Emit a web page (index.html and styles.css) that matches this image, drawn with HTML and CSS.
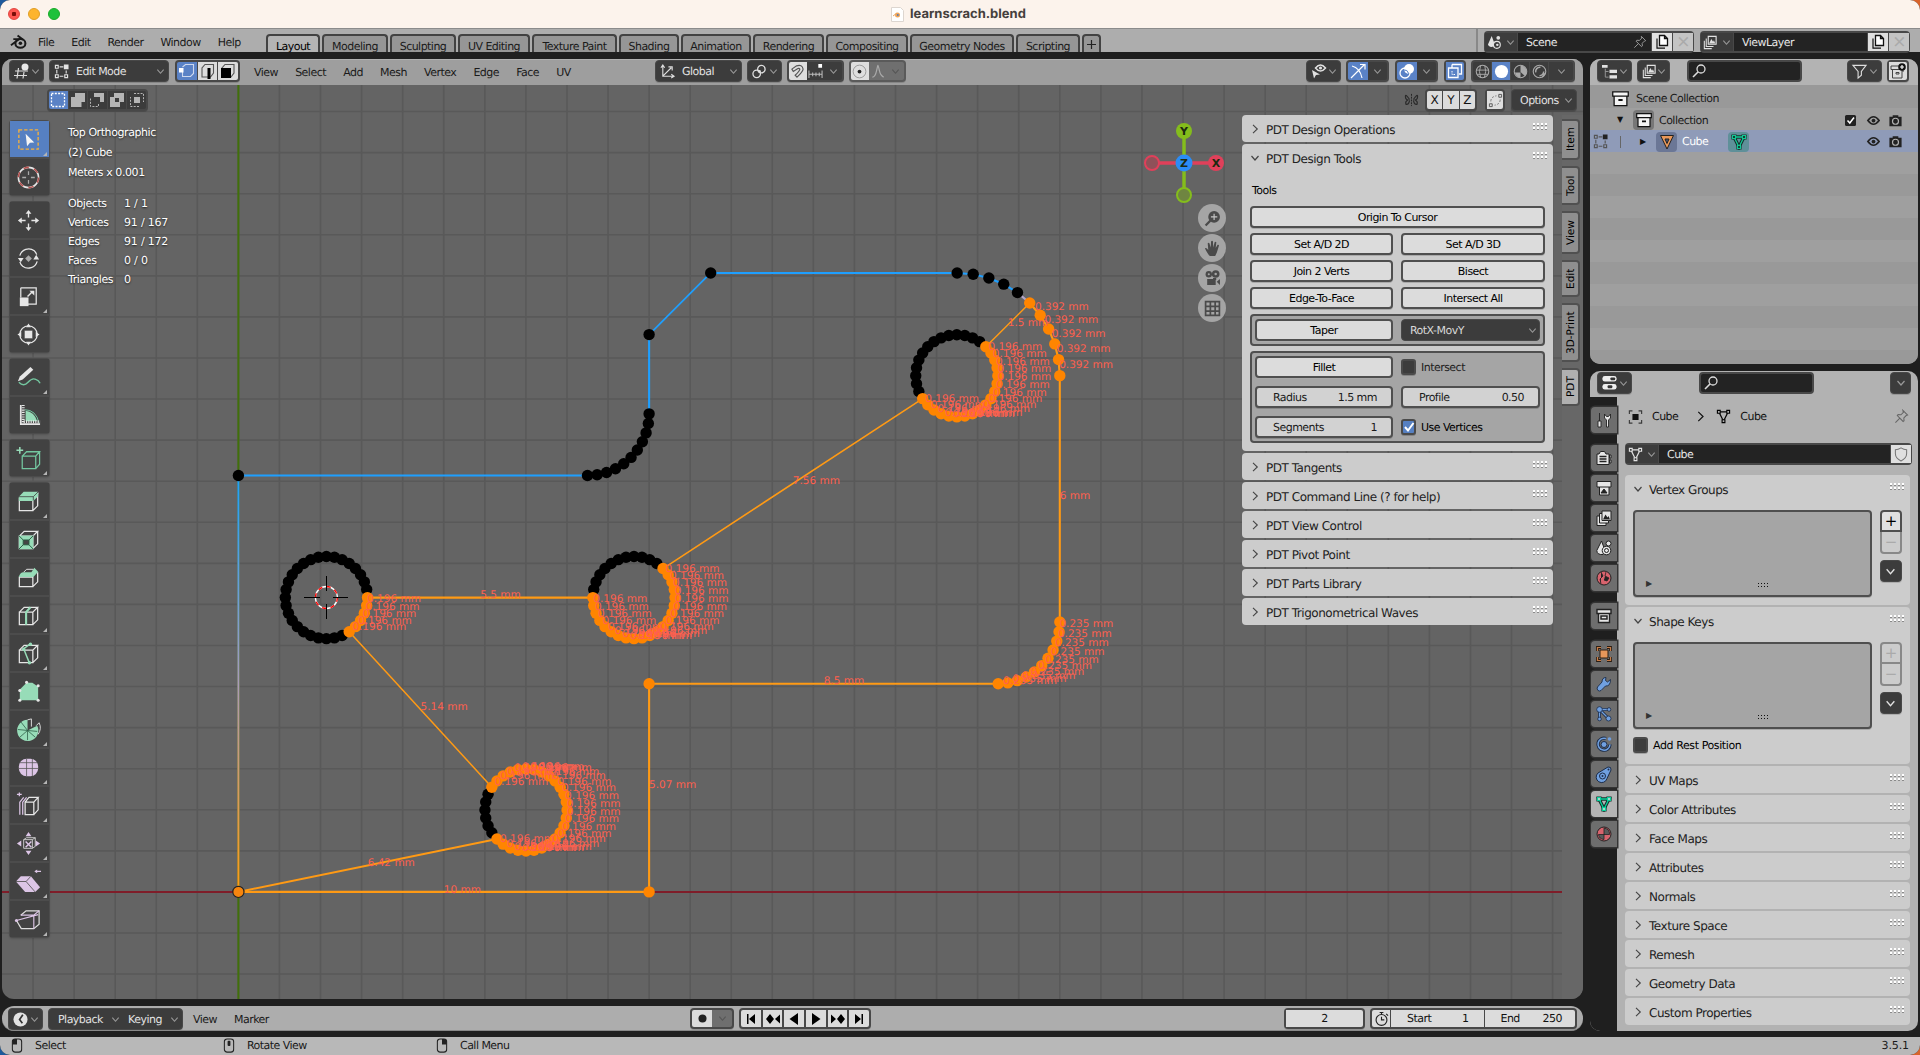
FILE: index.html
```html
<!DOCTYPE html>
<html lang="en">
<head>
<meta charset="utf-8">
<title>learnscrach.blend</title>
<link rel="stylesheet" href="styles.css">
</head>
<body>
<svg class="sprite" aria-hidden="true">
  <symbol id="chev" viewBox="0 0 10 10"><path d="M1.500 3l3.500 4 3.500-4" fill="none" stroke="currentColor" stroke-width="1.200"/></symbol>
  <symbol id="chevr" viewBox="0 0 10 10"><path d="M3 .8L7.300 5 3 9.200" fill="none" stroke="currentColor" stroke-width="1.100"/></symbol>
  <symbol id="grip" viewBox="0 0 15 8"><g fill="#8a8a8a"><path d="M0 2h2v1H0zM4 2h2v1H4zM8 2h2v1H8zM12 2h2v1h-2zM0 6h2v1H0zM4 6h2v1H4zM8 6h2v1H8zM12 6h2v1h-2z"/></g><g fill="#fff"><path d="M0 0h2v2H0zM4 0h2v2H4zM8 0h2v2H8zM12 0h2v2h-2zM0 4h2v2H0zM4 4h2v2H4zM8 4h2v2H8zM12 4h2v2h-2z"/></g></symbol>
  <symbol id="dots" viewBox="0 0 11 5"><path d="M0 0h1v1H0zM3 0h1v1H3zM6 0h1v1H6zM9 0h1v1H9zM0 3h1v1H0zM3 3h1v1H3zM6 3h1v1H6zM9 3h1v1H9z" fill="#111"/></symbol>
  <symbol id="pin" viewBox="0 0 16 16"><path d="M9.500 1.500l5 5-1.500.5-2.500 2.500.2 3-1 .8L3.500 7l.9-1 3 .2L10 3.500zM6 10l-4.500 4.500" fill="none" stroke="currentColor" stroke-width="1.100"/></symbol>
  <symbol id="search" viewBox="0 0 16 16"><circle cx="10" cy="6" r="4" fill="none" stroke="currentColor" stroke-width="1.300"/><path d="M7 9l-5 5" stroke="currentColor" stroke-width="1.600"/></symbol>
  <symbol id="copy" viewBox="0 0 16 16"><path d="M5.500 1.500h5l3 3v7h-8zM10.500 1.500v3h3" fill="#fff" stroke="#111" stroke-width="1.300"/><path d="M3 4.500v9.700h8" fill="none" stroke="#111" stroke-width="1.200"/></symbol>
  <symbol id="scene" viewBox="0 0 16 16"><path d="M5 1l3 8a2 2 0 0 1-1 3 4 4 0 0 1-6-2z" fill="currentColor"/><circle cx="12" cy="3" r="2" fill="currentColor"/><circle cx="10.500" cy="10.500" r="3.700" fill="#3c3c3c" stroke="currentColor" stroke-width="1.200"/><circle cx="11" cy="10.500" r="1.300" fill="currentColor"/></symbol>
  <symbol id="layers" viewBox="0 0 16 16"><path d="M6 1h9v9H6z" fill="none" stroke="currentColor" stroke-width="1.300"/><path d="M7 9l2.500-5 2 3 1-1.500L14 9z" fill="currentColor"/><path d="M3.700 3.500V12.500H12M1.500 6v9H10" fill="none" stroke="currentColor" stroke-width="1.200"/></symbol>
  <symbol id="meshdata" viewBox="0 0 16 16"><path d="M3 3h10L8 13z" fill="none" stroke="currentColor" stroke-width="1.300"/><g fill="var(--node,#3c3c3c)" stroke="currentColor" stroke-width="1.200"><path d="M1.500 1.500h3v3h-3zM11.500 1.500h3v3h-3zM6.500 11.500h3v3h-3z"/></g></symbol>
  <symbol id="meshdark" viewBox="0 0 16 16"><path d="M3 3h10L8 13z" fill="none" stroke="#15302a" stroke-width="3.400"/><path d="M.4.400h5.200v5.200H.4zM10.400.4h5.200v5.200h-5.200zM5.400 10.400h5.200v5.200H5.400z" fill="#15302a"/></symbol>
  <symbol id="object" viewBox="0 0 16 16"><path d="M4.500 4.500h7v7h-7z" fill="currentColor"/><path d="M1 4.500V1h3.500M11.500 1H15v3.500M15 11.500V15h-3.500M4.500 15H1v-3.500" fill="none" stroke="currentColor" stroke-width="1.300" opacity=".75"/></symbol>
  <symbol id="editmode" viewBox="0 0 16 16"><g fill="none" stroke="currentColor" stroke-width="1.200"><path d="M1.500 1.500h3v3h-3zM1.500 11.500h3v3h-3zM11.500 11.500h3v3h-3zM6 3h4M3 6v4M6 13h4M13 10V7"/></g><path d="M10.500.5h5v5h-5z" fill="var(--hot,currentColor)"/></symbol>
  <symbol id="box" viewBox="0 0 16 16"><path d="M.7 1.700h14.600v4H.7zM2 5.700h12v9H2z" fill="#f4f4f4" stroke="#111" stroke-width="1.200"/><path d="M6 8.500h4v1.800H6z" fill="#111"/></symbol>
  <symbol id="eye" viewBox="0 0 16 16"><path d="M2 8q6-8 12 0-6 8-12 0z" fill="none" stroke="#222" stroke-width="1.800"/><circle cx="8" cy="8" r="2" fill="#222"/></symbol>
  <symbol id="camera" viewBox="0 0 16 16"><path d="M1.500 4H5V2.500h6V4h3.500v10h-13z" fill="#222"/><circle cx="8" cy="8.800" r="3.200" fill="none" stroke="#b0b0b0" stroke-width="1.300"/></symbol>
  <symbol id="mouse" viewBox="0 0 12 16"><rect x="1" y="1" width="10" height="14" rx="3" fill="none" stroke="#222" stroke-width="1.200"/></symbol>
  <symbol id="cube" viewBox="0 0 28 28"><path d="M4.500 10.500h14v13h-14zM4.500 10.500l5-5h14l-5 5M18.500 23.500l5-5v-13" fill="none" stroke="currentColor" stroke-width="1.300"/></symbol>
  <symbol id="blender" viewBox="0 0 18 16"><path d="M1 11.500L9.500 5H3.500M8 1l6 4.600" fill="none" stroke="currentColor" stroke-width="2"/><ellipse cx="11" cy="9.500" rx="5.300" ry="4.600" fill="none" stroke="currentColor" stroke-width="2.200"/><circle cx="11" cy="9.300" r="1.900" fill="currentColor"/></symbol>
</svg>

<div class="window">
  <header class="titlebar">
    <span class="light close"></span><span class="light min"></span><span class="light max"></span>
    <div class="doc"><svg width="13" height="15" viewBox="0 0 13 15"><path d="M.5.5h9l3 3v11H.5z" fill="#fff" stroke="#ddd6d0"/><circle cx="6.500" cy="8" r="2.500" fill="#f1a65a"/><path d="M2 9l4-3" stroke="#f1a65a"/><circle cx="6.800" cy="8" r="1" fill="#587db5"/></svg>learnscrach.blend</div>
  </header>

  <nav class="topbar">
    <svg class="logo" width="17" height="16"><use href="#blender"/></svg>
    <div class="menus"><span>File</span><span>Edit</span><span>Render</span><span>Window</span><span>Help</span></div>
    <div class="workspaces"><b class="on">Layout</b><b>Modeling</b><b>Sculpting</b><b>UV Editing</b><b>Texture Paint</b><b>Shading</b><b>Animation</b><b>Rendering</b><b>Compositing</b><b>Geometry Nodes</b><b>Scripting</b><b class="plus"><svg width="9" height="9" viewBox="0 0 9 9"><path d="M4.500 0v9M0 4.500h9" stroke="#222" stroke-width="1.200"/></svg></b></div>
    <div class="datablocks">
      <div class="idblock">
        <span class="dark pick"><svg width="15" height="15"><use href="#scene"/></svg><svg width="9" height="9" class="dim"><use href="#chev"/></svg></span>
        <span class="field">Scene<svg width="14" height="14" class="dim"><use href="#pin"/></svg></span>
        <span class="light-btn"><svg width="16" height="16"><use href="#copy"/></svg></span><span class="light-btn off">×</span>
      </div>
      <div class="idblock">
        <span class="dark pick"><svg width="14" height="15"><use href="#layers"/></svg><svg width="9" height="9" class="dim"><use href="#chev"/></svg></span>
        <span class="field">ViewLayer</span>
        <span class="light-btn"><svg width="16" height="16"><use href="#copy"/></svg></span><span class="light-btn off">×</span>
      </div>
    </div>
  </nav>

  <main class="main">
    <div class="left">
      <section class="viewport">
        <svg class="scene" id="scene-view" viewBox="2 59 1581 940" width="1581" height="940"></svg>

        <div class="vp-header">
          <span class="btn w35"><svg width="16" height="16" viewBox="0 0 16 16"><path d="M1 8h13M0 12.500h13M4.500 5L3 15.500M10 9l-1 6.500" stroke="#ddd" fill="none" stroke-width="1.200"/><circle cx="11" cy="4" r="3.500" fill="#e8e8e8"/></svg><svg width="9" height="9" class="dim"><use href="#chev"/></svg></span>
          <span class="btn w120"><svg width="15" height="15"><use href="#editmode"/></svg><i>Edit Mode</i><svg width="9" height="9" class="dim"><use href="#chev"/></svg></span>
          <span class="seg selmodes">
            <em class="blue"><svg width="16" height="16" viewBox="0 0 16 16"><path d="M3.500 9v4.500h8l3-3v-9H6.500L3.500 4" fill="none" stroke="#cdd8ee" stroke-width="1.100"/><path d="M0 5h4.500v4.500H0z" fill="#fff"/></svg></em>
            <em><svg width="16" height="16" viewBox="0 0 16 16"><path d="M2 14V5l3-3.500h8.500V10l-3 4z" fill="none" stroke="#555" stroke-width="1.100"/><path d="M7.500 5h3v11h-3z"/></svg></em>
            <em><svg width="16" height="16" viewBox="0 0 16 16"><path d="M2 14V5l3-3.500h9V10l-3 4z" fill="none" stroke="#555" stroke-width="1.100"/><path d="M1 5h10v10H1z"/></svg></em>
          </span>
          <div class="menus"><span>View</span><span>Select</span><span>Add</span><span>Mesh</span><span>Vertex</span><span>Edge</span><span>Face</span><span>UV</span></div>
          <div class="mid">
            <span class="btn w87"><svg width="15" height="15" viewBox="0 0 16 16"><path d="M3 1v12h12M3 13L12 4M1 4l2-3 2 3M12 11l3 2-3 2M9 3h4v4" fill="none" stroke="#ddd" stroke-width="1.200"/></svg><i>Global</i><svg width="9" height="9" class="dim"><use href="#chev"/></svg></span>
            <span class="btn w35"><svg width="15" height="15" viewBox="0 0 16 16"><circle cx="10" cy="5.500" r="4" fill="none" stroke="#ddd" stroke-width="1.400"/><circle cx="5" cy="10.500" r="4" fill="none" stroke="#ddd" stroke-width="1.400"/><circle cx="8" cy="8" r="1.500" fill="#ddd"/></svg><svg width="9" height="9" class="dim"><use href="#chev"/></svg></span>
            <span class="seg snap"><em class="pale"><svg width="15" height="15" viewBox="0 0 16 16"><path d="M2 5.500l5-3.500q6-2 7 3.500-.5 3-6.500 8.500l-2-2Q10.500 7 10.500 5.500 9.500 4 8 5L3.500 8z" fill="none" stroke="#555" stroke-width="1.200"/></svg></em><em class="dk"><svg width="15" height="15" viewBox="0 0 16 16"><path d="M1 7v8M5 9v4M8.500 9v4M12 9v4M15 7v8M1 11h14" stroke="#bbb" stroke-width="1.100"/><path d="M11 0h4v4h-4z" fill="#fff"/></svg></em><em class="dk"><svg width="9" height="9" class="dim"><use href="#chev"/></svg></em></span>
            <span class="seg prop"><em class="pale"><svg width="15" height="15" viewBox="0 0 16 16"><circle cx="8" cy="8" r="6.800" fill="none" stroke="#999"/><circle cx="8" cy="8" r="2" fill="#222"/></svg></em><em class="gr"><svg width="14" height="15" viewBox="0 0 14 16"><path d="M1 14q3 0 4.500-7T7 2q.5 0 1.500 5t4.500 7" fill="none" stroke="#aaa" stroke-width="1.300"/></svg></em><em class="gr"><svg width="9" height="9" class="faint"><use href="#chev"/></svg></em></span>
          </div>
          <div class="right-tools">
            <span class="btn w35"><svg width="16" height="16" viewBox="0 0 16 16"><path d="M1 7l2 8.500 2-3.500 4-.5z" fill="#e2e2e2"/><path d="M4.500 5q5-6 10 0-5 6-10 0z" fill="none" stroke="#e2e2e2" stroke-width="1.500"/><circle cx="9.500" cy="5" r="1.600" fill="#e2e2e2"/></svg><svg width="9" height="9" class="dim"><use href="#chev"/></svg></span>
            <span class="seg s43"><em class="blue"><svg width="16" height="16" viewBox="0 0 16 16"><path d="M2 3q8 2 10 12M1 15L14 2M10 1.500h5v5" fill="none" stroke="#fff" stroke-width="1.200"/></svg></em><em class="dk"><svg width="9" height="9" class="dim"><use href="#chev"/></svg></em></span>
            <span class="seg s43"><em class="blue"><svg width="16" height="16" viewBox="0 0 16 16"><circle cx="10" cy="6" r="5" fill="#fff"/><circle cx="6" cy="10" r="5" fill="none" stroke="#fff" stroke-width="1.300"/><path d="M5 7q3-1 5 4" stroke="#5680c2" fill="none"/></svg></em><em class="dk"><svg width="9" height="9" class="dim"><use href="#chev"/></svg></em></span>
            <span class="seg s22"><em class="blue"><svg width="16" height="16" viewBox="0 0 16 16"><path d="M5 1.500h9.500V11H12M1.500 5H11v9.500H1.500zM5 1.500V5" fill="none" stroke="#fff" stroke-width="1.300"/><path d="M5 8v3.500h3" stroke="#fff" stroke-dasharray="1.500 1" fill="none"/></svg></em></span>
            <span class="seg shade">
              <em class="dk"><svg width="15" height="15" viewBox="0 0 16 16"><circle cx="8" cy="8" r="6.700" fill="none" stroke="#aaa" stroke-width="1.100"/><path d="M1.500 6.500h13M2 11h12M6 1.500Q3.500 8 6 14.500M10.500 2q2 6-.5 12.500" fill="none" stroke="#aaa"/></svg></em>
              <em class="blue"><svg width="15" height="15" viewBox="0 0 16 16"><circle cx="8" cy="8" r="7" fill="#fff"/></svg></em>
              <em class="dk"><svg width="15" height="15" viewBox="0 0 16 16"><circle cx="8" cy="8" r="6.700" fill="none" stroke="#aaa" stroke-width="1.100"/><path d="M8 1.500v7l5 4.500A7 7 0 0 0 8 1.500zM2 9h6v5.500A7 7 0 0 1 2 9z" fill="#aaa"/></svg></em>
              <em class="dk"><svg width="15" height="15" viewBox="0 0 16 16"><circle cx="8" cy="8" r="6.700" fill="none" stroke="#aaa" stroke-width="1.200"/><path d="M4 9a4.500 4.500 0 0 1 5-5.500M8 12.500a4.500 4.500 0 0 0 4.500-4.500M11 14l3-4" fill="none" stroke="#aaa" stroke-width="1.600"/></svg></em>
              <em class="dk wide"><svg width="9" height="9" class="dim"><use href="#chev"/></svg></em>
            </span>
          </div>
        </div>

        <div class="vp-sub">
          <span class="seg selops">
            <em class="blue"><svg width="16" height="16" viewBox="0 0 16 16"><path d="M1.500 1.500h13v13h-13z" fill="none" stroke="#fff" stroke-width="1.300" stroke-dasharray="2 1.300"/></svg></em>
            <em class="dk"><svg width="16" height="16" viewBox="0 0 16 16"><path d="M5 1h10v9h-3.500v5H1V5h4z" fill="#b5b5b5"/></svg></em>
            <em class="dk"><svg width="16" height="16" viewBox="0 0 16 16"><path d="M5 1h10v9h-4V5H5z" fill="#b5b5b5"/><path d="M1.500 6.500v8h8V12" fill="none" stroke="#b5b5b5" stroke-dasharray="2 1.300"/></svg></em>
            <em class="dk"><svg width="16" height="16" viewBox="0 0 16 16"><path d="M5 1h10v9h-4v5H1V5h4zM6 6v4h4V6z" fill="#b5b5b5" fill-rule="evenodd"/></svg></em>
            <em class="dk"><svg width="16" height="16" viewBox="0 0 16 16"><path d="M5 5h6v6H5z" fill="#b5b5b5"/><path d="M5 1.500h9.500V10M10 14.500H1.500V5" fill="none" stroke="#b5b5b5" stroke-dasharray="2 1.300"/></svg></em>
          </span>
          <div class="sub-right">
            <svg width="15" height="14" viewBox="0 0 16 15"><path d="M8 1v13" stroke="#222" stroke-dasharray="2 1"/><path d="M6 7Q1 0 1.500 4q0 3 2.500 3.500Q1 9 2 12q3 1 4-4M10 7q5-7 4.500-3 0 3-2.500 3.500Q15 9 14 12q-3 1-4-4" fill="none" stroke="#2a2a2a" stroke-width="1.200"/></svg>
            <span class="seg xyz"><em>X</em><em>Y</em><em>Z</em></span>
            <span class="seg s20"><em class="pale"><svg width="15" height="15" viewBox="0 0 16 16"><path d="M1.500 11.500h3v3h-3zM11.500 1.500h3v3h-3z" fill="none" stroke="#555"/><path d="M3 9q0-5 6-6M13 7q0 5-6 6" fill="none" stroke="#777" stroke-dasharray="2.500 1.500"/></svg></em></span>
            <span class="btn opts">Options<svg width="9" height="9" class="dim"><use href="#chev"/></svg></span>
          </div>
        </div>

        <div class="vp-body">
          <div class="toolbar">
            <div class="tools">
              <span class="tool active more"><svg viewBox="0 0 28 28"><path d="M4 4h20v20H4z" fill="none" stroke="#f5b03c" stroke-width="1.400" stroke-dasharray="3.500 2"/><path d="M11 8l9 9-4.500.3L12.500 21z" fill="#f4f4f4"/></svg></span>
              <span class="tool"><svg viewBox="0 0 28 28"><circle cx="14" cy="14" r="10.500" fill="none" stroke="#e6e6e6" stroke-width="1.600"/><circle cx="14" cy="14" r="10.500" fill="none" stroke="#b5504e" stroke-width="1.600" stroke-dasharray="5.500 5.500"/><path d="M14 7.500v4M14 16.500v4M7.500 14h4M16.500 14h4" stroke="#aaa" stroke-width="1.300"/></svg></span>
            </div>
            <div class="tools">
              <span class="tool"><svg viewBox="0 0 28 28" fill="#e6e6e6" stroke="#e6e6e6"><path d="M14 3l3 4h-6zM14 25l3-4h-6zM3 14l4-3v6zM25 14l-4-3v6z" stroke="none"/><path d="M14 6v5M14 17v5M6 14h5M17 14h5" stroke-width="1.400"/></svg></span>
              <span class="tool"><svg viewBox="0 0 28 28"><path d="M5 11a9.500 9.500 0 0 1 15-5M23 17A9.500 9.500 0 0 1 8 22M5 17.500a9 9 0 0 0 3 4.500M20 6a9 9 0 0 1 2.500 4" fill="none" stroke="#e6e6e6" stroke-width="1.300"/><path d="M3 13.500h6L6 18zM19 15h6l-3-5z" fill="#e6e6e6"/><path d="M14 10.500l3.500 3.500-3.500 3.500-3.500-3.500z" fill="#aaa"/></svg></span>
              <span class="tool more"><svg viewBox="0 0 28 28"><path d="M6 5h16v17H13M6 5v10" fill="none" stroke="#e6e6e6" stroke-width="1.300"/><path d="M5 15h9v9H5z" fill="#e6e6e6"/><path d="M13 14l5-5" stroke="#e6e6e6" stroke-width="1.500"/><path d="M15 8h5v5z" fill="#e6e6e6"/></svg></span>
              <span class="tool"><svg viewBox="0 0 28 28"><circle cx="14" cy="14" r="9" fill="none" stroke="#e6e6e6" stroke-width="1.400"/><path d="M9.500 9.500h9v9h-9z" fill="#e6e6e6" stroke="#444"/><path d="M14 2.500l2.500 4h-5zM14 25.500l2.500-4h-5zM2.500 14l4-2.500v5zM25.500 14l-4-2.500v5z" fill="#e6e6e6"/></svg></span>
            </div>
            <div class="tools">
              <span class="tool more"><svg viewBox="0 0 28 28"><path d="M3 18l2-5L16 3l3 3L8 16z" fill="#e6e6e6"/><path d="M4 19q5 5 9.500 0t8-3q3 1 4.500 4" fill="none" stroke="#74c7a0" stroke-width="1.500"/></svg></span>
              <span class="tool"><svg viewBox="0 0 28 28"><path d="M11 20V9q9 1 12 11z" fill="#97dcb8"/><path d="M10 8q12 0 15 14" fill="none" stroke="#74c7a0"/><path d="M6 3v20h20" fill="none" stroke="#e6e6e6" stroke-width="1.800"/><path d="M8.500 3v18M9 20.500h17" fill="none" stroke="#e6e6e6" stroke-width="3" stroke-dasharray="1.200 1.200"/></svg></span>
            </div>
            <div class="tools">
              <span class="tool more"><svg viewBox="0 0 28 28" color="#74c7a0"><path d="M7.500 11.500h14v13h-14zM7.500 11.500l4.500-4.500h13.500l-4 4.500M21.500 24.500l4-4.500V7" fill="none" stroke="#74c7a0" stroke-width="1.300"/><path d="M5 2v7M1.500 5.500h7" stroke="#97dcb8" stroke-width="1.600"/></svg></span>
            </div>
            <div class="tools">
              <span class="tool more"><svg viewBox="0 0 28 28" color="#e6e6e6"><use href="#cube"/><path d="M4 9l5-5h15v4.500l-5 5H4z" fill="#97dcb8"/><path d="M4 9h15l5-5M19 9v4" stroke="#3c3c3c" fill="none" stroke-width=".8"/></svg></span>
              <span class="tool"><svg viewBox="0 0 28 28" color="#e6e6e6"><use href="#cube"/><path d="M4 10h15v14H4z" fill="#97dcb8"/><path d="M8.500 14.500h6v5h-6z" fill="#444" stroke="#2a5a42"/><path d="M4 10l4.500 4.500M19 10l-4.500 4.500M4 24l4.500-4.500M19 24l-4.500-4.500" stroke="#2a5a42"/></svg></span>
              <span class="tool"><svg viewBox="0 0 28 28" color="#e6e6e6"><path d="M4.500 13.500h14v10h-14zM18.500 23.500l5-5v-10" fill="none" stroke="#e6e6e6" stroke-width="1.300"/><path d="M4 13.500q1-5 5-5h8l3-4.500 4 4-5 5.500z" fill="#97dcb8"/><path d="M9 8.500l3-3h7" stroke="#e6e6e6" fill="none"/></svg></span>
              <span class="tool more"><svg viewBox="0 0 28 28" color="#e6e6e6"><use href="#cube"/><path d="M11.500 23.500v-13l4.500-5" fill="none" stroke="#97dcb8" stroke-width="2.200"/></svg></span>
              <span class="tool more"><svg viewBox="0 0 28 28" color="#e6e6e6"><use href="#cube"/><path d="M16 4l-7 5 6 15" fill="none" stroke="#97dcb8" stroke-width="1.500"/><circle cx="16" cy="4.500" r="1.800" fill="#97dcb8"/><circle cx="9" cy="9.500" r="1.800" fill="#97dcb8"/><circle cx="15" cy="23.500" r="1.800" fill="#97dcb8"/></svg></span>
              <span class="tool"><svg viewBox="0 0 28 28"><path d="M5 23V12l7-7h6l6 4v14z" fill="#97dcb8"/><g fill="#e6e6e6"><circle cx="5" cy="23" r="1.600"/><circle cx="24" cy="23" r="1.600"/><circle cx="5" cy="13" r="1.600"/><circle cx="12" cy="4.500" r="1.600"/><circle cx="24" cy="8" r="1.600"/></g></svg></span>
              <span class="tool more"><svg viewBox="0 0 28 28"><path d="M13 4v11l10-5a11 11 0 1 1-10-6z" fill="#97dcb8"/><path d="M13 15v10M13 15l-10-1M13 15l-8 7M13 15l8 7M13 15l10 1M13 15L6 6" stroke="#2a5a42" stroke-width=".8"/><path d="M13 4l4-1v8M22 10l3-3q3 6-1 12" fill="none" stroke="#ddd"/></svg></span>
              <span class="tool more"><svg viewBox="0 0 28 28"><rect x="4" y="5" width="20" height="18" rx="8" fill="#dcc5e6"/><path d="M12 5v18M4 15h20M18 5v18M5 9h18" stroke="#555" stroke-width=".8" fill="none"/></svg></span>
              <span class="tool more"><svg viewBox="0 0 28 28" color="#e6e6e6"><path d="M10.500 10.500h9v13h-9zM10.500 10.500l4-5h9.500l-4.500 5M19.500 23.500l4.500-5v-13" fill="none" stroke="#e6e6e6" stroke-width="1.300"/><path d="M5 23.500v-13l4-5M8 23.500v-13l4-5" fill="none" stroke="#dcc5e6" stroke-width="1.300"/><path d="M2 2.500h5M4.500.5v4" stroke="#dcc5e6" stroke-width="1.300"/></svg></span>
              <span class="tool more"><svg viewBox="0 0 28 28"><path d="M9 10h9v9H9zM9 10l3-2h9l-3 2M18 19l3-2V8" fill="none" stroke="#ccc"/><path d="M11 12l6 6M17 12l-6 6" stroke="#dcc5e6" stroke-width="1.500"/><path d="M14 2l3 4.500h-6zM14 26l3-4.500h-6zM2 14l4.500-3v6zM26 14l-4.500-3v6z" fill="#dcc5e6"/></svg></span>
              <span class="tool more"><svg viewBox="0 0 28 28"><path d="M1 14l5-5.500h10.500L26 20l-5 5H10.500z" fill="#dcc5e6"/><path d="M1 14h10.500L21 25M11.500 14l5-5.500" fill="none" stroke="#555" stroke-width=".9"/><path d="M27 3.500h-6" stroke="#dcc5e6" stroke-width="1.300"/><path d="M20 3.500l3-2v4z" fill="#dcc5e6"/></svg></span>
              <span class="tool more"><svg viewBox="0 0 28 28"><path d="M6 9.500L11.500 5H25v14l-5.500 4.500h-13L1.500 15" fill="none" stroke="#ddd" stroke-width="1.300"/><path d="M6 9.500h13.500v14M19.500 9.500L25 5M1.500 15L24 9" fill="none" stroke="#dcc5e6" stroke-width="1.200"/><circle cx="1.500" cy="15" r="1.600" fill="#dcc5e6"/></svg></span>
            </div>
          </div>

          <div class="info">
            <div class="view-name"><span>Top Orthographic</span><span>(2) Cube</span><span>Meters x 0.001</span></div>
            <div class="stats">
              <span>Objects</span><span>1 / 1</span><span>Vertices</span><span>91 / 167</span><span>Edges</span><span>91 / 172</span><span>Faces</span><span>0 / 0</span><span>Triangles</span><span>0</span>
            </div>
          </div>

          <div class="nav">
            <svg class="gizmo" width="82" height="82" viewBox="-41 -41 82 82">
              <path d="M-26 0H26" stroke="#e0405a" stroke-width="3.500"/><path d="M0-26V26" stroke="#84bd1c" stroke-width="3.500"/>
              <circle cx="-32" r="7" fill="#8f5159" stroke="#e0405a" stroke-width="2"/><circle cy="32" r="7" fill="#6f8541" stroke="#84bd1c" stroke-width="2"/>
              <circle cx="32" r="8" fill="#e0405a"/><circle cy="-32" r="8" fill="#84bd1c"/><circle r="8.500" fill="#2b8cf6"/>
              <g class="axis"><text x="32" y="4">X</text><text y="-28">Y</text><text y="4">Z</text></g>
            </svg>
            <span class="round"><svg viewBox="0 0 16 16"><circle cx="9.500" cy="6.500" r="5.500"/><path d="M6 10l-4.500 4.500" stroke="#4a4a4a" stroke-width="2"/><path d="M9.500 3.500v6M6.500 6.500h6" stroke="#c5c5c5" stroke-width="1.100"/></svg></span>
            <span class="round"><svg viewBox="0 0 16 16"><path d="M4.500 14Q1 9 1 7.500q1.500-.5 3 2L3.500 3q1-1 1.700.2L6.300 7 6.700 1.200q1-1 1.700 0L8.700 7l1.300-5q1.200-.8 1.600.2L11 7.500l1.800-3q1.200-.4 1.300.6Q13 9 12 12l-1.500 3H5.500z"/></svg></span>
            <span class="round"><svg viewBox="0 0 16 16"><circle cx="4.500" cy="4" r="3"/><circle cx="11" cy="3.800" r="3.600"/><path d="M3 8.500h8V14H3zM12 11l3-2.500V14zM8.500 7.500h3v2h-3z"/><g fill="#a5a5a5"><circle cx="4.500" cy="4" r="1"/><circle cx="11" cy="3.800" r="1.200"/></g></svg></span>
            <span class="round"><svg viewBox="0 0 16 16"><path d="M1.500 1.500h13v13h-13zM1.500 6h13M1.500 10.500h13M6 1.500v13M10.500 1.500v13" fill="none" stroke="#4a4a4a" stroke-width="1.600"/></svg></span>
          </div>

          <div class="npanel">
            <div class="panel"><h3><svg class="arr" width="10" height="10"><use href="#chevr"/></svg>PDT Design Operations<svg class="grip" width="15" height="8"><use href="#grip"/></svg></h3></div>
            <div class="panel open"><h3><svg class="arr" width="10" height="10"><use href="#chev"/></svg>PDT Design Tools<svg class="grip" width="15" height="8"><use href="#grip"/></svg></h3>
              <p>Tools</p>
              <div class="grid2">
                <button class="full">Origin To Cursor</button>
                <button>Set A/D 2D</button><button>Set A/D 3D</button>
                <button>Join 2 Verts</button><button>Bisect</button>
                <button>Edge-To-Face</button><button>Intersect All</button>
              </div>
              <div class="box taper"><button>Taper</button><span class="select">RotX-MovY<svg width="9" height="9" class="dim"><use href="#chev"/></svg></span></div>
              <div class="box fillet">
                <button>Fillet</button><label class="muted"><span class="check"></span>Intersect</label>
                <span class="num"><i>Radius</i><i>1.5 mm</i></span><span class="num"><i>Profile</i><i>0.50</i></span>
                <span class="num"><i>Segments</i><i>1</i></span><label><span class="check on"><svg width="12" height="12" viewBox="0 0 12 12"><path d="M2 6l3 3.500L10.500 2" fill="none" stroke="#fff" stroke-width="2"/></svg></span>Use Vertices</label>
              </div>
            </div>
            <div class="panel"><h3><svg class="arr" width="10" height="10"><use href="#chevr"/></svg>PDT Tangents<svg class="grip" width="15" height="8"><use href="#grip"/></svg></h3></div>
            <div class="panel"><h3><svg class="arr" width="10" height="10"><use href="#chevr"/></svg>PDT Command Line (? for help)<svg class="grip" width="15" height="8"><use href="#grip"/></svg></h3></div>
            <div class="panel"><h3><svg class="arr" width="10" height="10"><use href="#chevr"/></svg>PDT View Control<svg class="grip" width="15" height="8"><use href="#grip"/></svg></h3></div>
            <div class="panel"><h3><svg class="arr" width="10" height="10"><use href="#chevr"/></svg>PDT Pivot Point<svg class="grip" width="15" height="8"><use href="#grip"/></svg></h3></div>
            <div class="panel"><h3><svg class="arr" width="10" height="10"><use href="#chevr"/></svg>PDT Parts Library<svg class="grip" width="15" height="8"><use href="#grip"/></svg></h3></div>
            <div class="panel"><h3><svg class="arr" width="10" height="10"><use href="#chevr"/></svg>PDT Trigonometrical Waves<svg class="grip" width="15" height="8"><use href="#grip"/></svg></h3></div>
          </div>
          <div class="side-tabs"><span>Item</span><span>Tool</span><span>View</span><span>Edit</span><span>3D-Print</span><span class="on">PDT</span></div>
        </div>
      </section>

      <section class="timeline">
        <span class="btn w35"><svg width="15" height="15" viewBox="0 0 16 16"><circle cx="8" cy="8" r="7.500" fill="#e2e2e2"/><path d="M10.500 3L7 8l3 4" stroke="#333" stroke-width="1.800" fill="none"/></svg><svg width="9" height="9" class="dim"><use href="#chev"/></svg></span>
        <span class="btn play"><i>Playback</i><svg width="9" height="9" class="dim"><use href="#chev"/></svg><i>Keying</i><svg width="9" height="9" class="dim"><use href="#chev"/></svg></span>
        <div class="menus"><span>View</span><span>Marker</span></div>
        <span class="seg rec"><em><svg width="9" height="9" viewBox="0 0 9 9"><circle cx="4.500" cy="4.500" r="4" fill="#222"/></svg></em><em class="gr"><svg width="9" height="9" class="faint"><use href="#chev"/></svg></em></span>
        <span class="seg transport">
          <em><svg viewBox="0 0 16 16"><path d="M4 3h1.500v10H4zM12 3v10L6 8z"/></svg></em>
          <em><svg viewBox="0 0 16 16"><path d="M5 3l4 5-4 5-4-5zM15 3.500v9L10 8z"/></svg></em>
          <em><svg viewBox="0 0 16 16"><path d="M12 2v12L3.500 8z"/></svg></em>
          <em><svg viewBox="0 0 16 16"><path d="M4 2v12l8.500-6z"/></svg></em>
          <em><svg viewBox="0 0 16 16"><path d="M11 3l4 5-4 5-4-5zM1 3.500v9L6 8z"/></svg></em>
          <em><svg viewBox="0 0 16 16"><path d="M10.500 3H12v10h-1.500zM4 3v10l6-5z"/></svg></em>
        </span>
        <span class="seg frame"><em>2</em></span>
        <span class="seg range"><em><svg width="15" height="16" viewBox="0 0 16 16"><circle cx="8" cy="9" r="5.800" fill="none" stroke="#222" stroke-width="1.200"/><path d="M6 1h4M8 1v2.500M8 5.500V9h3M13 2.500l2 2" fill="none" stroke="#222" stroke-width="1.200"/></svg></em><em><i>Start</i><i>1</i></em><em><i>End</i><i>250</i></em></span>
      </section>
    </div>

    <div class="right">
      <section class="outliner">
        <div class="ed-header">
          <span class="btn w35"><svg width="15" height="15" viewBox="0 0 16 16"><path d="M0 1h6v3H0zM8 6h8v3.500H8zM8 12h8v3.500H8z" fill="#e2e2e2"/><path d="M3.500 5v9H7M3.500 8H7" fill="none" stroke="#999"/></svg><svg width="9" height="9" class="dim"><use href="#chev"/></svg></span>
          <span class="btn w34"><svg width="14" height="15"><use href="#layers"/></svg><svg width="9" height="9" class="dim"><use href="#chev"/></svg></span>
          <span class="searchbox ol"><svg width="16" height="16"><use href="#search"/></svg></span>
          <span class="btn w35 filter"><svg width="15" height="15" viewBox="0 0 16 16"><path d="M1 1.500h14L10 8v4l-3.500 3V8z" fill="none" stroke="#ddd" stroke-width="1.200"/></svg><svg width="9" height="9" class="dim"><use href="#chev"/></svg></span>
          <span class="seg s22"><em><svg width="16" height="16" viewBox="0 0 16 16"><path d="M9 3H1v3.500h12V9M2.500 6.500V15H12V7M6 9.500h3V11H6z" fill="none" stroke="#444"/><circle cx="12" cy="4" r="3.800" fill="#111"/><path d="M12 2v4M10 4h4" stroke="#fff" stroke-width="1.200"/></svg></em></span>
        </div>
        <div class="rows">
          <div class="row r0"><svg width="17" height="17"><use href="#box"/></svg><span>Scene Collection</span></div>
          <div class="row r1"><u>▼</u><span class="chip"><svg width="16" height="16"><use href="#box"/></svg></span><span>Collection</span><span class="toggles"><svg width="11" height="11" viewBox="0 0 11 11"><rect width="11" height="11" rx="1.500" fill="#222"/><path d="M2.500 5.500l2.300 2.500L9 2.500" stroke="#fff" stroke-width="1.500" fill="none"/></svg><svg width="15" height="15"><use href="#eye"/></svg><svg width="15" height="15"><use href="#camera"/></svg></span></div>
          <div class="row r2"><svg class="em" width="15" height="15"><use href="#editmode"/></svg><u class="bar"></u><u>▶</u><span class="chip ob"><svg width="16" height="16" viewBox="0 0 16 16"><path d="M1.500 1.500h13L8 15z" fill="#e8975a" stroke="#222"/><path d="M6 5h4L8 9.500z" fill="#4b5876" stroke="#222"/></svg></span><span class="name">Cube</span><span class="chip md"><svg width="16" height="16" viewBox="0 0 16 16"><use href="#meshdark"/><use href="#meshdata"/></svg></span><span class="toggles"><svg width="15" height="15"><use href="#eye"/></svg><svg width="15" height="15"><use href="#camera"/></svg></span></div>
        </div>
      </section>

      <section class="props">
        <div class="tabcol">
          <span class="ptab t-tool"><svg viewBox="0 0 16 16"><path d="M3.500 1v8M2 9h3v6H2zM10.500 15V8L8.500 6V2l2 2.500h2L14.500 2v4l-2 2v7z" fill="#e6e6e6" stroke="#222" stroke-width=".9"/></svg></span>
          <span class="ptab g1"><svg viewBox="0 0 16 16"><path d="M1 4h2l1.500-2.500h4L10 4h3v10.500H1zM13.500 5H15v3h-1.500zM13.500 10H15v3h-1.500z" fill="#e6e6e6" stroke="#222"/><path d="M3.500 6.500h7M3.500 9h7M3.500 11.500h7" stroke="#222" stroke-width="1.300"/></svg></span>
          <span class="ptab"><svg viewBox="0 0 16 16"><path d="M1 1.500h14V7h-2v8H3.500V7H1z" fill="#e6e6e6" stroke="#222"/><path d="M3.500 7h9.500M5 13l3-4 3 4z" stroke="#222" fill="#222"/></svg></span>
          <span class="ptab"><svg viewBox="0 0 16 16"><path d="M1 6h2.500V3.500H6V1h9v9.500h-2.500V13H10v2.500H1z" fill="#e6e6e6" stroke="#222"/><path d="M3.500 6v7H10M6 3.500v7h6.500" fill="none" stroke="#222"/><path d="M7 9.500l2.500-5 2 3 1-1.500 1.500 3.500z" fill="#222"/></svg></span>
          <span class="ptab"><svg viewBox="0 0 16 16"><path d="M5.500 1l3 8-1.500 5.500Q1 15 .8 10.500z" fill="#e6e6e6" stroke="#222"/><circle cx="12.500" cy="3.500" r="2.500" fill="#e6e6e6" stroke="#222"/><circle cx="10.500" cy="10.500" r="4.300" fill="#e6e6e6" stroke="#222"/><circle cx="10.500" cy="10.500" r="2" fill="none" stroke="#222"/></svg></span>
          <span class="ptab"><svg viewBox="0 0 16 16"><circle cx="8" cy="8" r="7" fill="#d8636d" stroke="#222"/><path d="M5 2l2 4-3 3 1 5M10 2l-1 4 4 2-2 3-3-1" fill="#222" stroke="#222" stroke-width=".8"/></svg></span>
          <span class="ptab g2"><svg viewBox="0 0 16 16"><path d="M1 1.500h14v4H1zM2.500 5.500h11v9h-11z" fill="#e6e6e6" stroke="#222" stroke-width="1.400"/><path d="M5 8h6v3H5z" fill="none" stroke="#222" stroke-width="1.500"/></svg></span>
          <span class="ptab g3"><svg viewBox="0 0 16 16"><path d="M1.500 5V1.500H5M11 1.500h3.500V5M14.500 11v3.500H11M5 14.500H1.500V11" fill="none" stroke="#2b1d12" stroke-width="2.800"/><path d="M1.500 5V1.500H5M11 1.500h3.500V5M14.500 11v3.500H11M5 14.500H1.500V11" fill="none" stroke="#c77c46" stroke-width="1.200"/><path d="M4 4h8v8H4z" fill="#e8975a" stroke="#2b1d12"/></svg></span>
          <span class="ptab"><svg viewBox="0 0 16 16"><path d="M14.500 3.500l-3 2.500-2-1.500.5-3q-4 0-4 4.500L1.500 11q-1 2 .5 3.500 1.500 1 3 0L9.500 10q5 .5 5-6.500z" fill="#70a0e0" stroke="#1c2c48" stroke-width=".9"/></svg></span>
          <span class="ptab"><svg viewBox="0 0 16 16"><path d="M3.500 3.500h9M3.500 3.500v9M3.500 3.500l9 9" stroke="#1c2c48" stroke-width="3"/><path d="M3.500 3.500h9M3.500 3.500v9M3.500 3.500l9 9" stroke="#70a0e0" stroke-width="1.300"/><g fill="#70a0e0" stroke="#1c2c48" stroke-width=".8"><circle cx="3.500" cy="3.500" r="2.800"/><circle cx="13" cy="3.500" r="1.800"/><circle cx="3.500" cy="13" r="1.800"/><circle cx="12.500" cy="12.500" r="2.500"/></g></svg></span>
          <span class="ptab"><svg viewBox="0 0 16 16"><path d="M10 2.500a6 6 0 1 0 4 6" fill="none" stroke="#1c2c48" stroke-width="3.400"/><path d="M10 2.500a6 6 0 1 0 4 6" fill="none" stroke="#70a0e0" stroke-width="1.500"/><circle cx="8" cy="8.500" r="3" fill="#70a0e0" stroke="#1c2c48"/><circle cx="13.500" cy="3" r="1.800" fill="#70a0e0"/></svg></span>
          <span class="ptab"><svg viewBox="0 0 16 16"><path d="M2 7L12 1q3.500-.5 3 3l-4 8.500A5.500 5.500 0 1 1 2 7z" fill="#70a0e0" stroke="#1c2c48"/><circle cx="6.500" cy="10" r="3" fill="#70a0e0" stroke="#1c2c48"/><circle cx="6.500" cy="10" r="1" fill="#1c2c48"/><circle cx="12.500" cy="3.500" r="1" fill="#1c2c48"/></svg></span>
          <span class="ptab active"><svg viewBox="0 0 16 16"><use href="#meshdark"/><use href="#meshdata"/></svg></span>
          <span class="ptab"><svg viewBox="0 0 16 16"><circle cx="8" cy="8" r="7" fill="#d8636d" stroke="#222"/><path d="M8 2v6.500h5.500Q14 3 8 2zM8 8.500v5Q3 13 2.500 8.500z" fill="#5a5a5a" stroke="#222" stroke-width=".8"/></svg></span>
        </div>
        <div class="pmain">
          <div class="ed-header">
            <span class="btn w35"><svg width="15" height="16" viewBox="0 0 16 16"><rect x=".5" y=".5" width="15" height="6" rx="2.500" fill="#eee"/><rect x=".5" y="9" width="15" height="6" rx="2.500" fill="#eee"/><rect x="9" y="2" width="5" height="3" rx="1" fill="#333"/><rect x="6" y="10.500" width="5" height="3" rx="1" fill="#333"/></svg><svg width="9" height="9" class="dim"><use href="#chev"/></svg></span>
            <span class="searchbox pr"><svg width="16" height="16"><use href="#search"/></svg></span>
            <span class="btn ddl"><svg width="10" height="10" class="dim"><use href="#chev"/></svg></span>
          </div>
          <div class="crumbs"><svg width="15" height="14"><use href="#object"/></svg><span>Cube</span><svg width="11" height="11"><use href="#chevr"/></svg><svg width="15" height="15" class="md2"><use href="#meshdata"/></svg><span>Cube</span><svg class="pn" width="15" height="15"><use href="#pin"/></svg></div>
          <div class="idblock mesh"><span class="dark pick"><svg width="15" height="15"><use href="#meshdata"/></svg><svg width="9" height="9" class="dim"><use href="#chev"/></svg></span><span class="field">Cube</span><span class="light-btn"><svg width="14" height="15" viewBox="0 0 14 16"><path d="M7 1q3 2 6 2v4q0 5-6 8-6-3-6-8V3q3 0 6-2z" fill="none" stroke="#777" stroke-width="1.100"/></svg></span></div>
          <div class="panels">
            <div class="panel vg"><h3><svg class="arr" width="10" height="10"><use href="#chev"/></svg>Vertex Groups<svg class="grip" width="15" height="8"><use href="#grip"/></svg></h3>
              <div class="listrow"><div class="list"><u>▶</u><svg width="11" height="5"><use href="#dots"/></svg></div><div class="listbtns"><span class="a">+</span><span class="a b off">−</span><span class="btn dd"><svg width="11" height="11"><use href="#chev"/></svg></span></div></div></div>
            <div class="panel sk"><h3><svg class="arr" width="10" height="10"><use href="#chev"/></svg>Shape Keys<svg class="grip" width="15" height="8"><use href="#grip"/></svg></h3>
              <div class="listrow"><div class="list"><u>▶</u><svg width="11" height="5"><use href="#dots"/></svg></div><div class="listbtns"><span class="a off">+</span><span class="a b off">−</span><span class="btn dd"><svg width="11" height="11"><use href="#chev"/></svg></span></div></div>
              <label><span class="check"></span>Add Rest Position</label></div>
            <div class="panel"><h3><svg class="arr" width="10" height="10"><use href="#chevr"/></svg>UV Maps<svg class="grip" width="15" height="8"><use href="#grip"/></svg></h3></div>
            <div class="panel"><h3><svg class="arr" width="10" height="10"><use href="#chevr"/></svg>Color Attributes<svg class="grip" width="15" height="8"><use href="#grip"/></svg></h3></div>
            <div class="panel"><h3><svg class="arr" width="10" height="10"><use href="#chevr"/></svg>Face Maps<svg class="grip" width="15" height="8"><use href="#grip"/></svg></h3></div>
            <div class="panel"><h3><svg class="arr" width="10" height="10"><use href="#chevr"/></svg>Attributes<svg class="grip" width="15" height="8"><use href="#grip"/></svg></h3></div>
            <div class="panel"><h3><svg class="arr" width="10" height="10"><use href="#chevr"/></svg>Normals<svg class="grip" width="15" height="8"><use href="#grip"/></svg></h3></div>
            <div class="panel"><h3><svg class="arr" width="10" height="10"><use href="#chevr"/></svg>Texture Space<svg class="grip" width="15" height="8"><use href="#grip"/></svg></h3></div>
            <div class="panel"><h3><svg class="arr" width="10" height="10"><use href="#chevr"/></svg>Remesh<svg class="grip" width="15" height="8"><use href="#grip"/></svg></h3></div>
            <div class="panel"><h3><svg class="arr" width="10" height="10"><use href="#chevr"/></svg>Geometry Data<svg class="grip" width="15" height="8"><use href="#grip"/></svg></h3></div>
            <div class="panel"><h3><svg class="arr" width="10" height="10"><use href="#chevr"/></svg>Custom Properties<svg class="grip" width="15" height="8"><use href="#grip"/></svg></h3></div>
          </div>
        </div>
      </section>
    </div>
  </main>

  <footer class="status">
    <span class="hint"><svg width="12" height="15" viewBox="0 0 12 16"><use href="#mouse"/><path d="M1 7V4q0-3 3-3h2v6z" fill="#222"/></svg>Select</span>
    <span class="hint"><svg width="12" height="15" viewBox="0 0 12 16"><use href="#mouse"/><rect x="4.500" y="3" width="3" height="5.500" rx="1" fill="#222"/></svg>Rotate View</span>
    <span class="hint"><svg width="12" height="15" viewBox="0 0 12 16"><use href="#mouse"/><path d="M11 7V4q0-3-3-3H6v6z" fill="#222"/></svg>Call Menu</span>
    <span class="version">3.5.1</span>
  </footer>
</div>
<script src="scene.js"></script>
</body>
</html>
```

FILE: styles.css
```css
* { box-sizing: border-box; }
body {
  margin: 0; width: 1920px; height: 1055px; overflow: hidden;
  background: linear-gradient(90deg, #1d5a9c 50%, #d8632b 50%);
  font: 11px/1 "DejaVu Sans", sans-serif; letter-spacing: -.53px; color: #1a1a1a;
  text-rendering: geometricPrecision; white-space: nowrap;
}
svg { display: block; flex: none; }
svg:not(:root) { overflow: visible; }
.sprite { position: absolute; width: 0; height: 0; }
i, em, u, b { font-style: normal; text-decoration: none; font-weight: normal; }
.window { width: 1920px; height: 1055px; display: flex; flex-direction: column; background: #1f1f1f; border-radius: 10px; overflow: hidden; }

.titlebar { height: 28px; background: #fcf3ec; display: flex; align-items: center; padding-left: 8px; gap: 8px; position: relative; }
.light { width: 12px; height: 12px; border-radius: 50%; }
.close { background: radial-gradient(circle, #7a0d08 2px, #fe5650 2.500px); border: .5px solid #e0443e; }
.min { background: #fdb42d; border: .5px solid #e09e26; }
.max { background: #1dc13b; border: .5px solid #1aab29; }
.doc { display: flex; align-items: center; gap: 6px; margin-left: 823px; font: bold 13px/1 Inter, "Open Sans", sans-serif; letter-spacing: 0; color: #45403d; }

.topbar { height: 24px; background: #adadad; border-top: 1px solid #8b8b8b; display: flex; align-items: flex-start; }
.logo { margin: 5px 0 0 10px; }
.menus { display: flex; gap: 17px; }
.topbar .menus { margin: 8px 0 0 11px; width: 228px; }
.workspaces { display: grid; align-self: flex-end; height: 18px; gap: 2px; grid-template-columns: 54px 66px 66px 72px 85px 60px 70px 71px 82px 104px 64px 19px; }
.workspaces b { background: #969696; border: 2px solid #424242; border-bottom: 0; border-radius: 4px 4px 0 0; text-align: center; padding-top: 5px; }
.workspaces .on { background: #b4b4b4; color: #000; }
.workspaces .plus { display: flex; justify-content: center; padding-top: 4px; }
.datablocks { margin-left: auto; width: 444px; height: 23px; border-left: 2px solid #888; display: flex; gap: 6px; padding: 2px 0 0 6px; }
.idblock { display: flex; height: 22px; background: #484848; border-radius: 4px; padding: 2px 1px; gap: 1px; width: 210px; }
.dark { background: #3c3c3c; color: #e2e2e2; }
.pick { width: 32px; display: flex; align-items: center; justify-content: space-around; }
.dim { color: #999; }
.faint { color: #555; }
.field { flex: 1; background: #232323; color: #e6e6e6; display: flex; align-items: center; justify-content: space-between; padding: 0 4px 0 8px; }
.light-btn { width: 20px; background: #e0e0e0; display: flex; align-items: center; justify-content: center; }
.light-btn.off { background: #c4c4c4; color: #aaa; font-size: 17px; }

.main { display: flex; height: 972px; margin-top: 7px; padding-left: 2px; gap: 7px; }
.left { width: 1581px; display: flex; flex-direction: column; gap: 7px; }
.viewport { height: 940px; border-radius: 10px 10px 12px 12px; overflow: hidden; position: relative; background: #646464; }
.scene { position: absolute; left: 0; top: 0; }
.scene .label { font-size: 10.500px; letter-spacing: 0; fill: #ff604e; }

.vp-header { position: relative; height: 26px; background: #9e9e9e; border-top: 1px solid #b0b0b0; display: flex; align-items: flex-start; padding-left: 7px; }
.vp-header .menus { margin: 7px 0 0 14px; width: 401px; gap: 17.200px; }
.btn { display: inline-flex; align-items: center; justify-content: space-between; background: #3c3c3c; color: #e2e2e2; height: 22px; border-radius: 4px; border: 1px solid #484848; box-shadow: 0 1px 0 rgba(0,0,0,.15); padding: 0 3px 0 4px; }
.w34 { width: 33px; }
.w35 { width: 35px; }
.w120 { width: 120px; margin-left: 5px; }
.w120 i { flex: 1; margin-left: 7px; }
.w87 { width: 87px; }
.w87 i { flex: 1; margin-left: 7px; }
.seg { display: inline-flex; height: 22px; background: #484848; border-radius: 4px; padding: 2px; gap: 1px; box-shadow: 0 1px 0 rgba(0,0,0,.15); }
.seg em { flex: 1; display: flex; align-items: center; justify-content: center; background: #dcdcdc; color: #111; }
.seg em:first-child { border-radius: 2px 0 0 2px; }
.seg em:last-child { border-radius: 0 2px 2px 0; }
.seg em.blue { background: #5a82c6; }
.seg em.dk { background: #3c3c3c; }
.seg em.pale { background: #dedede; }
.seg em.gr { background: #6f6f6f; }
.selmodes { width: 65px; margin-left: 6px; }
.mid { display: flex; gap: 5px; }
.snap { width: 57px; gap: 0; }
.prop { width: 57px; background: #5a5a5a; gap: 0; }
.right-tools { margin: 0 8px 0 auto; display: flex; gap: 5px; }
.s43 { width: 43px; gap: 0; margin-right: 1px; }
.s22 { width: 22px; }
.s20 { width: 20px; }
.shade { width: 104px; }
.shade .wide { flex: 1.300; }

.vp-sub { position: relative; height: 30px; display: flex; align-items: flex-start; padding: 4px 6px 0 45px; }
.selops { width: 101px; height: 22px; }
.sub-right { margin-left: auto; display: flex; align-items: center; gap: 6px; height: 22px; }
.xyz { width: 52px; margin-right: 2px; font-size: 12px; letter-spacing: 0; }
.opts { width: 66px; padding-left: 8px; }

.vp-body { position: relative; display: flex; height: 884px; }
.toolbar { width: 41px; margin: 5px 0 0 7px; display: flex; flex-direction: column; gap: 5px; }
.tools { background: #4c4c4c; border-radius: 4px; padding: 1px; box-shadow: 0 1px 2px rgba(0,0,0,.15); display: flex; flex-direction: column; gap: 2px; }
.tool { height: 36px; background: #424242; display: flex; align-items: center; justify-content: center; position: relative; }
.tool svg { width: 27px; height: 27px; margin-right: 2px; }
.tool.active { background: #5680c2; }
.tool.more::after { content: ""; position: absolute; right: 2px; bottom: 1px; border: 2.500px solid transparent; border-right-color: #b5b5b5; border-bottom-color: #b5b5b5; }
.info { width: 250px; margin: 12px 0 0 18px; color: #fff; text-shadow: 0 1px 2px rgba(0,0,0,.7); letter-spacing: -.42px; }
.view-name span { display: block; height: 20px; line-height: 11px; }
.stats { display: grid; grid-template-columns: 56px 1fr; grid-auto-rows: 19px; margin-top: 11px; }
.stats span:nth-child(even) { letter-spacing: -.2px; }
.nav { width: 83px; margin: 7px 16px 0 auto; display: flex; flex-direction: column; align-items: flex-end; }
.gizmo { margin-right: 1px; }
.axis text { font: bold 11px "DejaVu Sans", sans-serif; text-anchor: middle; letter-spacing: 0; fill: #1c2a10; }
.round { width: 28px; height: 28px; border-radius: 50%; background: #a5a5a5; display: flex; align-items: center; justify-content: center; margin-bottom: 2px; }
.round svg { width: 17px; height: 17px; fill: #4a4a4a; }

.npanel { width: 311px; display: flex; flex-direction: column; gap: 2px; }
.panel { background: #ccc; border-radius: 4px; }
.panel h3 { margin: 0; height: 27px; display: flex; align-items: center; font-size: 12px; font-weight: normal; letter-spacing: -.47px; padding: 2px 5px 0 8px; color: #222; }
.panel .arr { margin: -1px 6px 0 0; color: #444; }
.panel .grip { margin: -6px 0 0 auto; }
.panel.open { height: 307px; padding-bottom: 0; }
.panel p { margin: 14px 0 0 10px; height: 21px; color: #000; }
.grid2 { display: grid; grid-template-columns: 143px 144px; column-gap: 8px; row-gap: 5px; margin-left: 8px; }
button { font: inherit; letter-spacing: inherit; color: #000; height: 22px; padding: 0; border: 2px solid #4f4f4f; background: #dcdcdc; border-radius: 4px; box-shadow: 0 1px 0 #aaa; }
.full { grid-column: 1 / 3; }
.box { margin: 5px 0 0 8px; width: 295px; border: 2px solid #4f4f4f; border-radius: 4px; background: #a5a5a5; display: grid; grid-template-columns: 138px 139px; column-gap: 8px; padding: 3px 0 0 3px; }
.taper { height: 32px; }
.fillet { height: 92px; row-gap: 8px; grid-auto-rows: 22px; }
.select { height: 22px; background: #3c3c3c; border: 1px solid #484848; border-radius: 4px; color: #d8d8d8; display: flex; align-items: center; justify-content: space-between; padding: 0 2px 0 8px; }
.num { height: 22px; border: 2px solid #4f4f4f; background: #d2d2d2; border-radius: 4px; box-shadow: 0 1px 0 #888; display: flex; align-items: center; justify-content: space-between; padding: 0 14px 0 16px; }
label { display: flex; align-items: center; gap: 5px; color: #000; }
label.muted { color: #222; }
.check { width: 15px; height: 16px; border: 2px solid #4a4a4a; background: #3c3c3c; border-radius: 3px; display: flex; align-items: center; justify-content: center; box-shadow: 0 1px 0 rgba(0,0,0,.2); }
.check.on { background: #5680c2; }
.side-tabs { width: 21px; margin-left: 9px; background: #676767; padding: 4px 3px 0 0; display: flex; flex-direction: column; gap: 6px; }
.side-tabs span { writing-mode: vertical-rl; transform: rotate(180deg); background: #8f8f8f; border: 2px solid #505050; border-right: 0; border-radius: 4px 0 0 4px; height: 41px; display: flex; align-items: center; justify-content: center; padding-right: 2px; letter-spacing: 0; font-size: 10.500px; color: #000; }
.side-tabs span:nth-child(2) { height: 39px; }
.side-tabs span:nth-child(3) { height: 43px; }
.side-tabs span:nth-child(4) { height: 37px; }
.side-tabs span:nth-child(5) { height: 59px; }
.side-tabs span:nth-child(6) { height: 38px; background: #b0b0b0; }

.timeline { height: 25px; background: #adadad; border-radius: 12px; display: flex; padding: 2px 6px 0 6px; border-bottom: 1px solid #888; overflow: hidden; }
.timeline .btn { height: 22px; }
.play { width: 135px; margin-left: 5px; padding: 0 3px 0 9px; }
.timeline .menus { margin: 6px 0 0 10px; width: 497px; }
.timeline .seg { height: 21px; }
.rec { width: 44px; gap: 0; }
.transport { width: 132px; margin-left: 5px; gap: 2px; }
.transport svg { width: 16px; height: 16px; }
.frame { width: 81px; margin-left: auto; }
.range { width: 207px; margin-left: 5px; }
.range em:first-child { flex: 0 0 18px; }
.range em + em { justify-content: space-between; padding: 0 15px 0 16px; }
.range em:last-child { padding: 0 13px 0 16px; }

.right { width: 329px; display: flex; flex-direction: column; gap: 7px; }
.outliner { height: 305px; border-radius: 10px; overflow: hidden; background: #9e9e9e; width: 328px; }
.ed-header { height: 26px; background: #b3b3b3; display: flex; padding: 1px 0 0 7px; }
.ed-header .w34 { margin-left: 5px; }
.searchbox { width: 115px; height: 22px; background: #232323; border: 2px solid #484848; border-radius: 4px; color: #ddd; display: flex; align-items: center; padding-left: 2px; }
.ol { margin-left: 17px; }
.filter { margin-left: 45px; }
.filter + .seg { margin-left: 5px; }
.rows { height: 279px; background: repeating-linear-gradient(#999 0 22px, #9f9f9f 22px 44px); background-position: 0 1px; }
.row { height: 22px; display: flex; align-items: center; }
.r0 { height: 23px; padding: 3px 0 0 22px; gap: 7px; }
.r1 { padding: 2px 15px 0 27px; }
.r2 { background: #8f9bb8; padding: 1px 15px 0 3px; color: #555; --hot: #222; }
.r1 u, .r2 u { width: 19px; font-size: 8px; letter-spacing: 0; color: #111; }
.r1 u { width: 17px; }
.r2 .bar { width: 1px; height: 12px; background: #666; margin: 0 19px 0 12px; }
.r2 u + u { width: 16px; }
.chip { width: 21px; height: 20px; border-radius: 4px; background: #777; display: flex; align-items: center; justify-content: center; margin-right: 5px; }
.r1 .chip { margin-left: -1px; }
.ob { background: #6b7796; }
.md { background: #5f9099; color: #10c795; --node: #15302a; margin-left: 18px; }
.name { color: #fff; width: 28px; }
.toggles { margin-left: auto; display: flex; align-items: center; gap: 7px; }
.toggles svg:first-child:nth-last-child(3) { margin-right: 3px; }

.props { height: 660px; border-radius: 10px; overflow: hidden; background: #b2b2b2; display: grid; grid-template-columns: 27px 1fr; width: 328px; }
.tabcol { background: #1f1f1f; margin-top: 26px; padding-top: 10px; display: flex; flex-direction: column; gap: 4px; }
.ptab { height: 26px; margin-left: 1px; background: #6e6e6e; border-radius: 4px 0 0 4px; display: flex; align-items: center; justify-content: center; box-shadow: 0 0 0 1.500px #343434; }
.ptab svg { width: 16px; height: 16px; }
.g1, .g2, .g3 { margin-top: 8px; }
.ptab.active { background: #b4b4b4; color: #06cf9a; --node: #b8d8ce; }
.pmain .ed-header { margin-left: -27px; background: transparent; }
.pr { margin-left: 67px; }
.ddl { margin-left: 76px; width: 21px; padding: 0 5px; }
.crumbs { height: 38px; display: flex; align-items: center; padding: 1px 9px 0 11px; color: #111; }
.crumbs span { margin-left: 9px; }
.crumbs span + svg { margin-left: 17px; }
.crumbs .md2 { margin-left: 10px; --node: #b2b2b2; color: #000; }
.crumbs .md2 + span { margin-left: 9px; }
.crumbs .pn { margin-left: auto; color: #666; }
.mesh { width: 287px; margin: 8px 0 0 8px; }
.panels { margin: 10px 0 0 8px; width: 285px; display: flex; flex-direction: column; gap: 2px; }
.vg { height: 130px; }
.sk { height: 157px; }
.listrow { display: flex; margin: 8px 0 0 8px; gap: 8px; }
.list { width: 239px; height: 87px; border: 2px solid #4f4f4f; border-radius: 4px; background: #a5a5a5; box-shadow: 0 1px 0 #aaa; display: flex; align-items: flex-end; padding: 0 0 7px 11px; color: #333; }
.list u { font-size: 8px; width: 112px; letter-spacing: 0; }
.listbtns { width: 22px; display: flex; flex-direction: column; }
.a { height: 22px; border: 2px solid #4f4f4f; border-radius: 4px 4px 0 0; background: #e0e0e0; font-size: 15px; letter-spacing: 0; display: flex; align-items: center; justify-content: center; color: #000; }
.b { border-top: 0; border-radius: 0 0 4px 4px; }
.a.off { border-color: #888; background: #ccc; color: #aaa; }
.dd { margin-top: 6px; padding: 0 4px; }
.sk label { margin: 8px 0 0 8px; gap: 5px; letter-spacing: -.4px; }

.status { height: 18px; margin-top: 6px; background: #b8b8b8; display: flex; align-items: center; padding: 0 11px 2px; }
.hint { display: flex; align-items: center; gap: 12px; width: 212px; }
.hint:nth-child(2) { width: 213px; }
.version { margin-left: auto; letter-spacing: -.1px; }
```

FILE: scene.js
```js
(function () {
  var NS = "http://www.w3.org/2000/svg";
  var svg = document.getElementById("scene-view");
  var OX = 238.4, OY = 891.9, U = 41.07;
  var BLUE = "#1e9fff", ORANGE = "#ff9a14", DOT = "#ff8500";

  function add(tag, attrs, text) {
    var e = document.createElementNS(NS, tag);
    for (var k in attrs) e.setAttribute(k, attrs[k]);
    if (text) e.textContent = text;
    svg.appendChild(e);
    return e;
  }
  function line(a, b, color, w) {
    return add("line", { x1: a[0], y1: a[1], x2: b[0], y2: b[1], stroke: color, "stroke-width": w || 2.1 });
  }
  function P(x, y) { return [OX + x * U, OY - y * U]; }

  // Floor grid and world axes
  var i;
  for (i = -5; i <= 32; i++) line([OX + i * U, 85], [OX + i * U, 999], "#595959", 1.6);
  for (i = -2; i <= 19; i++) line([2, OY - i * U], [1583, OY - i * U], "#595959", 1.6);
  line([2, 892], [1562, 892], "#7f1d29", 2);
  line([OX, 85], [OX, 999], "#41700a", 2);

  var defs = add("defs", {});
  defs.innerHTML = '<linearGradient id="fade" gradientUnits="userSpaceOnUse" x1="0" y1="475" x2="0" y2="892"><stop offset="0" stop-color="#1e9fff"/><stop offset=".5" stop-color="#aa9ab8"/><stop offset="1" stop-color="#ff9a14"/></linearGradient>';

  var black = [], orange = [], labels = [];
  function arc(cx, cy, r, a0, step, n) {
    var out = [];
    for (var k = 0; k <= n; k++) {
      var t = (a0 + step * k) * Math.PI / 180;
      out.push([cx + r * Math.cos(t), cy + r * Math.sin(t)]);
    }
    return out;
  }
  function chain(pts, color) { for (var k = 1; k < pts.length; k++) line(pts[k - 1], pts[k], color); }
  function measure(a, b, text) { labels.push([(a[0] + b[0]) / 2, (a[1] + b[1]) / 2 + 0.6, text]); }
  function measured(pts, text) {
    chain(pts, ORANGE);
    for (var k = 1; k < pts.length; k++) measure(pts[k - 1], pts[k], text);
    orange = orange.concat(pts);
  }

  var H = 10.14, origin = P(0, 0), topLeft = P(0, H);
  var inner = arc(P(8.5, 0)[0], P(0, H + 1.5)[1], 1.5 * U, 90, -9, 10);
  var step1 = P(10, 13.57), step2 = P(11.5, 15.07);
  var outer = arc(P(17.5, 0)[0], P(0, 12.57)[1], 2.5 * U, -90, 9, 10);
  var lower = arc(P(18.5, 0)[0], P(0, 6.57)[1], 1.5 * U, 0, 9, 10);
  var knee = P(10, 5.07), foot = P(10, 0);

  add("rect", { x: OX - 1, y: 475, width: 2, height: 417, fill: "url(#fade)" });
  line(topLeft, inner[0], BLUE); chain(inner, BLUE);
  line(inner[10], step1, BLUE); line(step1, step2, BLUE, 1.7); line(step2, outer[0], BLUE);
  chain(outer.slice(0, 5), BLUE); line(outer[4], outer[5], "#b5a5c8");
  black = black.concat([topLeft], inner, [step1, step2], outer.slice(0, 5));
  measured(outer.slice(5), "0.392 mm");
  measured(lower, "0.235 mm");
  [[outer[10], lower[0], "6 mm"], [lower[10], knee, "8.5 mm"], [knee, foot, "5.07 mm"], [foot, origin, "10 mm"]].forEach(function (s) {
    line(s[0], s[1], ORANGE); measure(s[0], s[1], s[2]);
  });
  orange.push(knee, foot);

  // Bolt circles: 32 vertices each, selected between two steps
  function ring(cx, cy, from, to) {
    var all = arc(cx, cy, U, from * 11.25, 11.25, 31);
    var n = to - from;
    black = black.concat(all.slice(n + 1));
    chain(all.slice(n + 1), "#000");
    measured(all.slice(0, n + 1), "0.196 mm");
    return [all[0], all[n]];
  }
  var a = ring(326.4, 597.6, 0, 5);
  var b = ring(634, 597.6, -4, 16);
  var c = ring(956.8, 375.8, -4, 13);
  var d = ring(526, 810, -13, 12);
  [[a[0], b[1], "5.5 mm", 2.1], [b[0], c[1], "7.56 mm", 1.6], [c[0], outer[5], "1.5 mm", 1.5], [a[1], d[0], "5.14 mm", 1.5], [d[1], origin, "6.42 mm", 2]].forEach(function (s) {
    line(s[0], s[1], ORANGE, s[3]); measure(s[0], s[1], s[2]);
  });

  black.forEach(function (p) { add("circle", { cx: p[0], cy: p[1], r: 5.7, fill: "#000" }); });
  orange.forEach(function (p) { add("circle", { cx: p[0], cy: p[1], r: 5.7, fill: DOT }); });
  add("circle", { cx: origin[0], cy: origin[1], r: 5.6, fill: "#f5850f", stroke: "#222", "stroke-width": 1.2 });

  // 3D cursor
  var cx = 326.4, cy = 597.5;
  add("circle", { cx: cx, cy: cy, r: 11, fill: "none", stroke: "#fff", "stroke-width": 1.3 });
  add("circle", { cx: cx, cy: cy, r: 11, fill: "none", stroke: "#f00", "stroke-width": 1.3, "stroke-dasharray": "4.3 4.3" });
  add("path", { d: "M304 597.500h16M333 597.500h15M326.500 576v15M326.500 604v15", stroke: "#000", "stroke-width": 1 });

  labels.forEach(function (l) { add("text", { x: l[0], y: l[1], "class": "label" }, l[2]); });
})();
```
